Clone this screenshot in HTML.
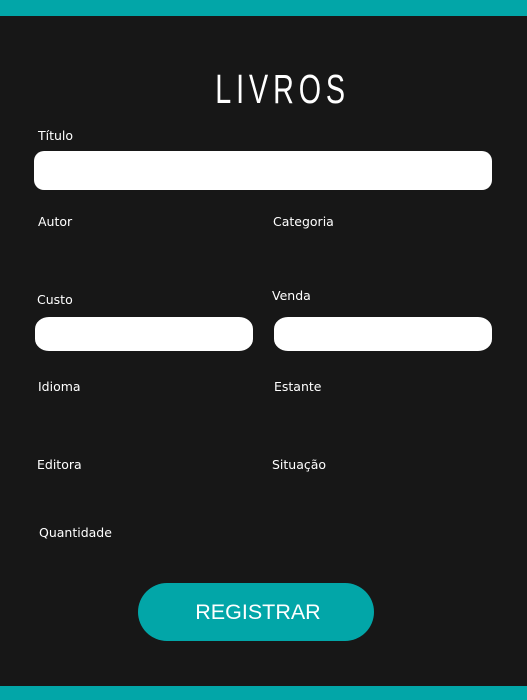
<!DOCTYPE html>
<html><head><meta charset="utf-8"><style>
body{margin:0;width:527px;height:700px;background:#171717;position:relative;overflow:hidden;font-family:"DejaVu Sans","Liberation Sans",sans-serif;}
.bar{position:absolute;left:0;width:527px;background:#02a6a8}
.l{position:absolute;color:#fff;font-size:12.5px;line-height:14px;top:0}
.in{position:absolute;background:#fff}
h1{position:absolute;margin:0;left:19px;width:527px;top:68px;text-align:center;color:#fff;font-family:"Liberation Sans",sans-serif;font-weight:normal;font-size:41px;line-height:42px;letter-spacing:7px;transform:scaleX(0.7);transform-origin:264px 0}
.btn{position:absolute;left:138px;top:583px;width:236px;height:58px;border-radius:29px;background:#02a6a8;color:#fff;font-family:"Liberation Sans",sans-serif;font-size:21.5px;line-height:58px;text-align:center;box-sizing:border-box;padding-left:4px}
</style></head><body>
<div class="bar" style="top:0;height:16px"></div>
<div class="bar" style="top:686px;height:14px"></div>
<h1>LIVROS</h1>
<div class="l" style="left:38px;top:129px">Título</div>
<div class="in" style="left:34px;top:151px;width:458px;height:39px;border-radius:10px"></div>
<div class="l" style="left:38px;top:215px">Autor</div>
<div class="l" style="left:273px;top:215px">Categoria</div>
<div class="l" style="left:37px;top:293px">Custo</div>
<div class="l" style="left:272px;top:289px">Venda</div>
<div class="in" style="left:35px;top:317px;width:218px;height:34px;border-radius:14px/12px"></div>
<div class="in" style="left:274px;top:317px;width:218px;height:34px;border-radius:14px/12px"></div>
<div class="l" style="left:38px;top:380px">Idioma</div>
<div class="l" style="left:274px;top:380px">Estante</div>
<div class="l" style="left:37px;top:458px">Editora</div>
<div class="l" style="left:272px;top:458px">Situação</div>
<div class="l" style="left:39px;top:526px">Quantidade</div>
<div class="btn">REGISTRAR</div>
</body></html>
